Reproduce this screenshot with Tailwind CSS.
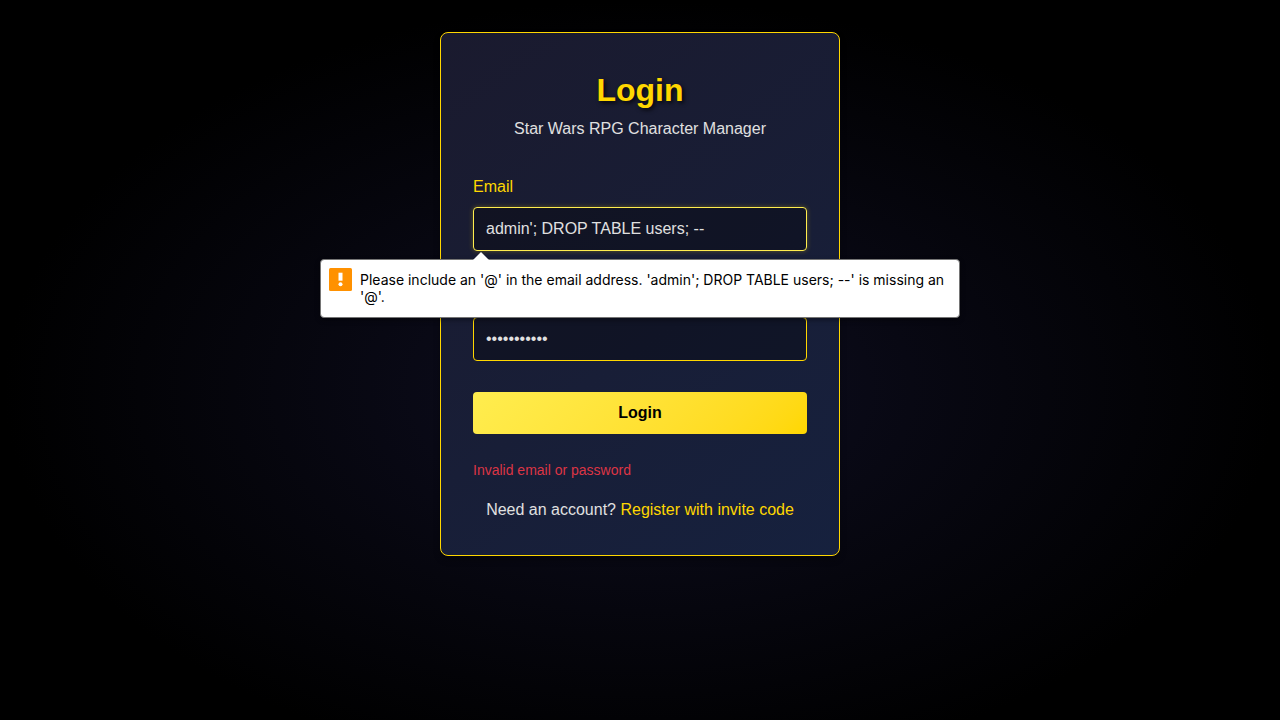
<!DOCTYPE html>
<html lang="en">
<head>
<meta charset="utf-8">
<meta name="viewport" content="width=device-width, initial-scale=1">
<title>Login</title>
<script src="https://cdn.jsdelivr.net/npm/@tailwindcss/browser@4"></script>
</head>
<body class="min-h-screen bg-black bg-[radial-gradient(71vw_77vh_at_50%_54%,#0e0e21_0%,#000000_70%)] px-4 py-8 font-['Liberation_Sans',Arial,sans-serif] text-base text-[#e0e0e0]">
<main class="mx-auto w-full max-w-[400px] rounded-lg border border-[#ffd700] bg-linear-145 from-[#1a1a2e] to-[#16213e] p-8 shadow-[0_4px_6px_rgba(0,0,0,0.3)]">
  <header class="mb-8 text-center">
    <h1 class="text-[32px] leading-[50px] font-bold text-[#ffd700] [text-shadow:2px_2px_4px_rgba(0,0,0,0.8)]">Login</h1>
    <p class="leading-[27px]">Star Wars RPG Character Manager</p>
  </header>
  <form novalidate onsubmit="return false">
    <div class="relative mb-8">
      <label for="email" class="mb-2 block leading-[25px] text-[#ffd700]">Email</label>
      <input id="email" type="text" value="admin'; DROP TABLE users; --" aria-describedby="hint" class="block h-11 w-full rounded border border-[#ffed4e] bg-black/30 px-3 shadow-[0_0_5px_rgba(255,215,0,0.3)] outline-none">
      <div id="hint" role="alert" class="absolute top-full left-1/2 z-10 mt-2 flex w-[640px] -translate-x-1/2 items-start gap-2 rounded border border-[#757575] bg-white p-2 font-[Inter,sans-serif] text-sm leading-[17px] text-black shadow-[0_2px_5px_rgba(0,0,0,0.4)]">
        <svg class="absolute -top-2 left-[152px] h-2 w-4" viewBox="0 0 16 8" aria-hidden="true"><path d="M0 8 8 0 16 8Z" fill="#fff"/></svg>
        <svg class="size-[23px] shrink-0" viewBox="0 0 23 23" aria-hidden="true"><rect width="23" height="23" rx="1.5" fill="#ff9100"/><path d="M9.5 4.700h4v8h-4z" fill="#fff"/><circle cx="11.500" cy="16.200" r="2" fill="#fff"/></svg>
        <p class="min-w-0 flex-1 pt-[3px] pb-1">Please include an '@' in the email address. 'admin'; DROP TABLE users; --' is missing an '@'.</p>
      </div>
    </div>
    <div class="mb-[31px]">
      <label for="password" class="invisible mb-2 block leading-[26px] text-[#ffd700]">Password</label>
      <input id="password" type="password" aria-label="Password" value="password123" class="block h-11 w-full rounded border border-[#ffd700] bg-black/30 px-3 outline-none">
    </div>
    <button type="submit" class="block h-[42px] w-full rounded bg-linear-135 from-[#ffed4e] to-[#ffd700] font-bold text-black">Login</button>
  </form>
  <p class="mt-[25px] text-sm leading-[22px] text-[#dc3545]">Invalid email or password</p>
  <p class="mt-4 text-center leading-[26px]">Need an account? <a href="#" class="text-[#ffd700]">Register with invite code</a></p>
</main>
</body>
</html>
